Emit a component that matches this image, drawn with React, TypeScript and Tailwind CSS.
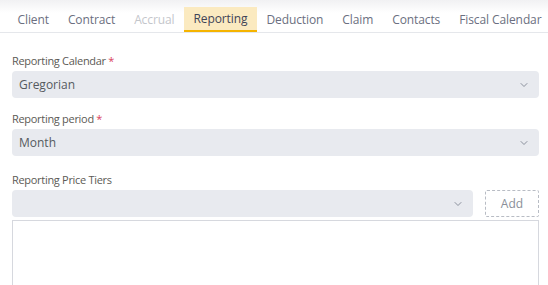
import { ChevronDown } from 'lucide-react';

const tabs = [
  { label: 'Client' },
  { label: 'Contract' },
  { label: 'Accrual', disabled: true },
  { label: 'Reporting', active: true },
  { label: 'Deduction' },
  { label: 'Claim' },
  { label: 'Contacts' },
  { label: 'Fiscal Calendar' },
];

function Select({ value, className = '' }: { value?: string; className?: string }) {
  return (
    <div className={`h-[27px] bg-[#e8eaef] rounded-[4px] flex items-center justify-between pl-[7px] pr-[9px] ${className}`}>
      <span className="text-[12px] text-[#555a60]">{value}</span>
      <ChevronDown size={12} strokeWidth={1.5} className="text-[#6b7280]" />
    </div>
  );
}

function Label({ text, required }: { text: string; required?: boolean }) {
  return (
    <div className="text-[11px] tracking-[-0.3px] text-[#5c5a55] leading-[15px] mb-[3px]">
      {text}
      {required && <span className="text-[#d9435c]"> *</span>}
    </div>
  );
}

export default function App() {
  return (
    <div className="w-[548px] h-[285px] bg-white overflow-hidden font-['Open_Sans',sans-serif]">
      {/* Tabs */}
      <div className="h-[33px] bg-gradient-to-b from-[#f1f1f3] to-white to-40% border-b border-[#e5e7eb] flex items-end pl-[8px]">
        {tabs.map((t) => (
          <div
            key={t.label}
            className={`h-[25px] px-[9.5px] flex items-center whitespace-nowrap text-[12px] tracking-[-0.1px] ${
              t.active
                ? 'bg-[#fbeac0] text-[#3f4456] border-b-[2px] border-[#f5b400] pt-[1px]'
                : t.disabled
                ? 'text-[#c4c6cb]'
                : 'text-[#6b6f80]'
            }`}
          >
            {t.label}
          </div>
        ))}
      </div>

      {/* Form */}
      <div className="px-[12px] pr-[9px] pt-[20px]">
        <Label text="Reporting Calendar" required />
        <Select value="Gregorian" />

        <div className="mt-[13px]">
          <Label text="Reporting period" required />
          <Select value="Month" />
        </div>

        <div className="mt-[16px]">
          <Label text="Reporting Price Tiers" />
          <div className="flex gap-[12px]">
            <Select className="flex-1" />
            <div className="w-[54px] h-[27px] border border-dashed border-[#b8bcc4] rounded-[2px] flex items-center justify-center text-[12px] text-[#8a8f99]">
              Add
            </div>
          </div>
          <div className="mt-[3px] h-[80px] border border-[#d6d8de]" />
        </div>
      </div>
    </div>
  );
}
